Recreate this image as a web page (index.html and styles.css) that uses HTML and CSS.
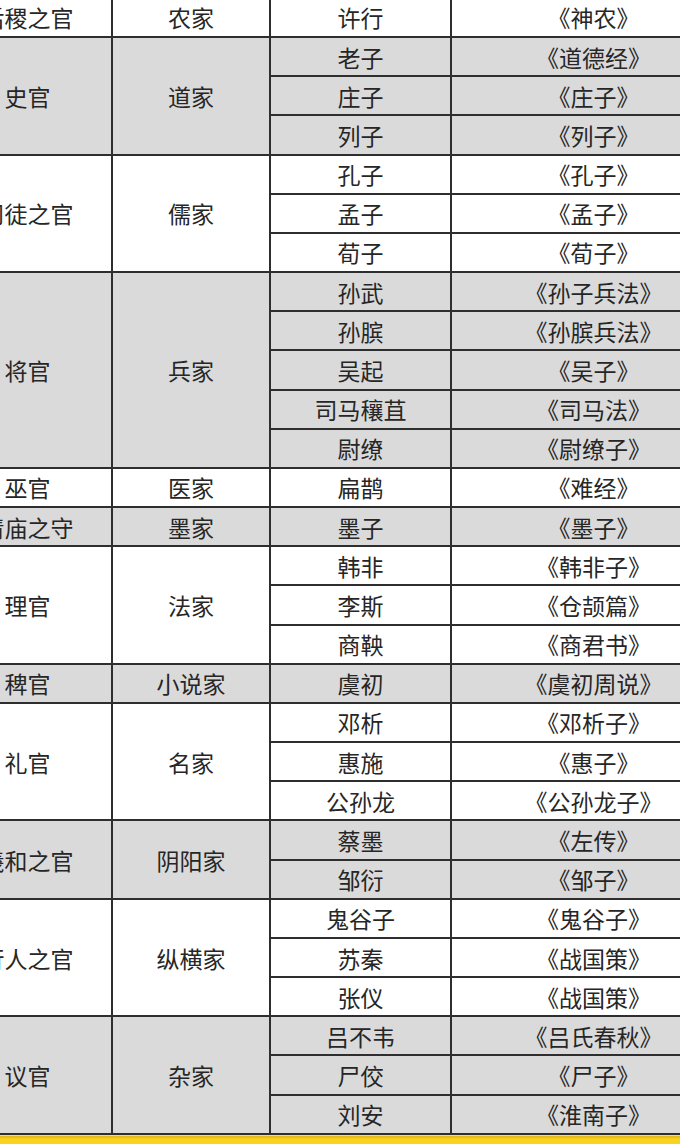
FILE: index.html
```html
<!DOCTYPE html>
<html lang="zh">
<head>
<meta charset="utf-8">
<title>诸子百家</title>
<link rel="stylesheet" href="styles.css">
</head>
<body>
<div class="page">
  <div class="grid">
    <div class="c w">后稷之官</div><div class="c w">农家</div><div class="c w">许行</div><div class="c w">《神农》</div>

    <div class="c g s3">史官</div><div class="c g s3">道家</div>
    <div class="c g">老子</div><div class="c g">《道德经》</div>
    <div class="c g">庄子</div><div class="c g">《庄子》</div>
    <div class="c g">列子</div><div class="c g">《列子》</div>

    <div class="c w s3">司徒之官</div><div class="c w s3">儒家</div>
    <div class="c w">孔子</div><div class="c w">《孔子》</div>
    <div class="c w">孟子</div><div class="c w">《孟子》</div>
    <div class="c w">荀子</div><div class="c w">《荀子》</div>

    <div class="c g s5">将官</div><div class="c g s5">兵家</div>
    <div class="c g">孙武</div><div class="c g">《孙子兵法》</div>
    <div class="c g">孙膑</div><div class="c g">《孙膑兵法》</div>
    <div class="c g">吴起</div><div class="c g">《吴子》</div>
    <div class="c g">司马穰苴</div><div class="c g">《司马法》</div>
    <div class="c g">尉缭</div><div class="c g">《尉缭子》</div>

    <div class="c w">巫官</div><div class="c w">医家</div><div class="c w">扁鹊</div><div class="c w">《难经》</div>

    <div class="c g">清庙之守</div><div class="c g">墨家</div><div class="c g">墨子</div><div class="c g">《墨子》</div>

    <div class="c w s3">理官</div><div class="c w s3">法家</div>
    <div class="c w">韩非</div><div class="c w">《韩非子》</div>
    <div class="c w">李斯</div><div class="c w">《仓颉篇》</div>
    <div class="c w">商鞅</div><div class="c w">《商君书》</div>

    <div class="c g">稗官</div><div class="c g">小说家</div><div class="c g">虞初</div><div class="c g">《虞初周说》</div>

    <div class="c w s3">礼官</div><div class="c w s3">名家</div>
    <div class="c w">邓析</div><div class="c w">《邓析子》</div>
    <div class="c w">惠施</div><div class="c w">《惠子》</div>
    <div class="c w">公孙龙</div><div class="c w">《公孙龙子》</div>

    <div class="c g s2">羲和之官</div><div class="c g s2">阴阳家</div>
    <div class="c g">蔡墨</div><div class="c g">《左传》</div>
    <div class="c g">邹衍</div><div class="c g">《邹子》</div>

    <div class="c w s3">行人之官</div><div class="c w s3">纵横家</div>
    <div class="c w">鬼谷子</div><div class="c w">《鬼谷子》</div>
    <div class="c w">苏秦</div><div class="c w">《战国策》</div>
    <div class="c w">张仪</div><div class="c w">《战国策》</div>

    <div class="c g s3">议官</div><div class="c g s3">杂家</div>
    <div class="c g">吕不韦</div><div class="c g">《吕氏春秋》</div>
    <div class="c g">尸佼</div><div class="c g">《尸子》</div>
    <div class="c g">刘安</div><div class="c g">《淮南子》</div>
  </div>
  <div class="gap"></div>
  <div class="bar"></div>
</div>
</body>
</html>
```

FILE: styles.css
```css
html, body {
  margin: 0;
  padding: 0;
  background: #ffffff;
  overflow: hidden;
}

.page {
  width: 680px;
  height: 1144px;
  overflow: hidden;
  display: flex;
  flex-direction: column;
}

.grid {
  display: grid;
  grid-template-columns: 167px 156px 179px 283px;
  grid-auto-rows: 37.18px;
  gap: 2px;
  padding: 2px;
  background: #2e2e2e;
  margin-left: -58px;
  margin-top: -3.2px;
  width: max-content;
  flex: none;
}

.c {
  display: flex;
  align-items: center;
  justify-content: center;
  font-family: "Noto Sans CJK SC", "Noto Sans", sans-serif;
  font-size: 23px;
  color: #262626;
  white-space: nowrap;
}

.w { background: #ffffff; }
.g { background: #dadada; }

.s2 { grid-row: span 2; }
.s3 { grid-row: span 3; }
.s5 { grid-row: span 5; }

.gap {
  height: 1px;
  background: #d8d8d8;
  flex: none;
}

.bar {
  flex: 1;
  background: linear-gradient(#e0b21a, #f7d21e 40%, #f8d41f);
}
```
